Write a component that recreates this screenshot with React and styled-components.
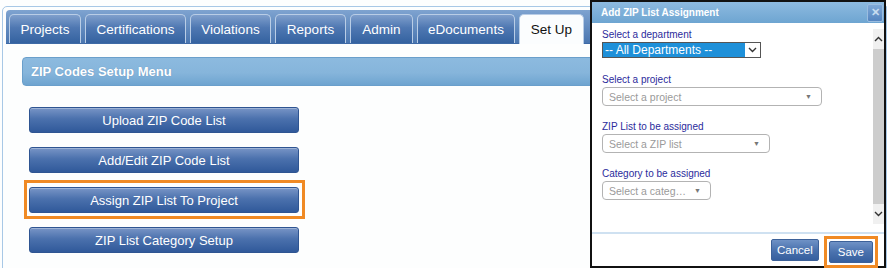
import React from 'react';
import styled, { createGlobalStyle } from "styled-components";

const GlobalStyle = createGlobalStyle`
    html, body {
        margin: 0;
        padding: 0;
        background: #ffffff;
        font-family: "Liberation Sans", Arial, sans-serif;
        overflow: hidden;
    }
`;

const Page = styled.div`
    position: relative;
    width: 887px;
    height: 268px;
    overflow: hidden;
    background: #fdfefe;
`;

const Panel = styled.div`
    margin: 6px 0 0 2px;
    height: 280px;
    border: 1px solid #a8c8e6;
    border-radius: 5px 0 0 0;
    padding: 3px 0 0 3px;
    background: #fdfefe;
`;

const TabBar = styled.div`
    display: flex;
    align-items: flex-end;
    gap: 4px;
    height: 33px;
    padding-left: 3px;
    border-radius: 4px 0 0 0;
    background: linear-gradient(#7ea3d0, #4a76b0);
    border-bottom: 1px solid #3e6aa6;
`;

const Tab = styled.div`
    display: flex;
    align-items: center;
    justify-content: center;
    width: ${p => p.$w}px;
    box-sizing: border-box;
    border: 1px solid #b9cde6;
    border-bottom: none;
    border-radius: 5px 5px 0 0;
    font-size: 13.5px;
    color: ${p => (p.$active ? "#111" : "#fff")};
    background: ${p => (p.$active
        ? "#fbfdfe"
        : "linear-gradient(#7f9fcc 0%, #4f78b2 45%, #3462a0 100%)")};
    margin-bottom: ${p => (p.$active ? "-1px" : "0")};
    height: ${p => (p.$active ? "30px" : "29px")};
`;

const Content = styled.div`
    padding: 13px 0 0 16px;
`;

const MenuHeader = styled.div`
    height: 27px;
    display: flex;
    align-items: center;
    padding-left: 8px;
    border: 1px solid #6a9fcb;
    border-radius: 4px 0 0 4px;
    background: linear-gradient(#8cbadf 0%, #86b5db 55%, #6ea4d0 100%);
    color: #fff;
    font-weight: bold;
    font-size: 13px;
    text-shadow: 0 0 1px rgba(40, 80, 130, 0.4);
`;

const MenuList = styled.div`
    display: flex;
    flex-direction: column;
    gap: 14px;
    padding: 21px 0 0 7px;
`;

const Highlight = styled.div`
    width: ${p => (p.$on ? 281 : 270)}px;
    box-sizing: border-box;
    padding: ${p => (p.$on ? "4px 3px 3px 2px" : "0")};
    margin: ${p => (p.$on ? "-7px 0 -6px -5px" : "0")};
    border: ${p => (p.$on ? "3px solid #f08a24" : "none")};
`;

const MenuButton = styled.div`
    width: 270px;
    height: 26px;
    box-sizing: border-box;
    display: flex;
    align-items: center;
    justify-content: center;
    border: 1px solid #2f5592;
    border-radius: 3px;
    background: linear-gradient(#7895c6 0%, #4b71ad 45%, #30599a 100%);
    color: #fff;
    font-size: 13px;
    box-shadow: inset 0 1px 0 rgba(255,255,255,0.3);
`;

const Dialog = styled.div`
    position: absolute;
    left: 590px;
    top: 0;
    width: 296px;
    height: 268px;
    box-sizing: border-box;
    border: 2px solid #111;
    background: #fff;
    display: flex;
    flex-direction: column;
`;

const DialogHeader = styled.div`
    height: 21px;
    flex: none;
    display: flex;
    align-items: center;
    justify-content: space-between;
    padding: 0 0 0 9px;
    background: linear-gradient(#8dbae0, #6ea5d1);
    color: #fff;
    font-weight: bold;
    font-size: 10px;
`;

const CloseBox = styled.div`
    width: 14px;
    height: 16px;
    margin-right: 1px;
    border: 1px solid #9bbde0;
    border-radius: 2px;
    background: linear-gradient(#7fa8d6, #5585c0);
    display: flex;
    align-items: center;
    justify-content: center;
    color: #c8dcf0;
    font-size: 11px;
    line-height: 1;
`;

const DialogBody = styled.div`
    flex: 1;
    display: flex;
    min-height: 0;
    border-bottom: 2px solid #cfe1f1;
`;

const Form = styled.div`
    flex: 1;
    padding: 6px 0 0 10px;
    display: flex;
    flex-direction: column;
`;

const Field = styled.div`
    display: flex;
    flex-direction: column;
    gap: 1px;
    margin-bottom: ${p => p.$mb}px;
`;

const Label = styled.div`
    font-size: 10px;
    line-height: 12px;
    color: #2b2b9c;
`;

const NativeSelect = styled.div`
    width: 159px;
    height: 16px;
    box-sizing: border-box;
    border: 1px solid #555;
    display: flex;
    align-items: center;
    background: #1e90d9;
    color: #fff;
    font-size: 12px;
    padding-left: 2px;
`;

const NativeArrow = styled.div`
    margin-left: auto;
    width: 15px;
    height: 100%;
    background: #fff;
    display: flex;
    align-items: center;
    justify-content: center;
`;

const Combo = styled.div`
    width: ${p => p.$w}px;
    height: 19px;
    box-sizing: border-box;
    border: 1px solid #b3b3b3;
    border-radius: 4px;
    display: flex;
    align-items: center;
    padding: 0 9px 0 6px;
    color: #9a9a9a;
    font-size: 10.5px;
    background: #fff;
`;

const Caret = styled.span`
    margin-left: auto;
    font-size: 7px;
    color: #777;
`;

const Scrollbar = styled.div`
    width: 11px;
    flex: none;
    margin: 6px 0 8px;
    background: #f0f0f0;
    display: flex;
    flex-direction: column;
    align-items: center;
`;

const ScrollBtn = styled.div`
    height: 20px;
    display: flex;
    align-items: center;
    justify-content: center;
`;

const Thumb = styled.div`
    flex: 1;
    width: 100%;
    background: #cdcdcd;
`;

const Footer = styled.div`
    height: 32px;
    flex: none;
    display: flex;
    align-items: center;
    justify-content: flex-end;
    gap: 5px;
    padding-right: 6px;
`;

const FootBtn = styled.div`
    height: 22px;
    box-sizing: border-box;
    padding: 0 ${p => p.$px}px;
    display: flex;
    align-items: center;
    border: 1px solid #3c6199;
    border-radius: 2px;
    background: linear-gradient(#6f92c6 0%, #4a72ae 50%, #365f9e 100%);
    color: #fff;
    font-size: 11.5px;
`;

const SaveWrap = styled.div`
    border: 3px solid #f08a24;
    padding: 2px;
    margin-top: 4px;
`;

const tabs = [
    ["Projects", 72],
    ["Certifications", 101],
    ["Violations", 81],
    ["Reports", 71],
    ["Admin", 63],
    ["eDocuments", 98],
    ["Set Up", 65],
];

const menu = [
    "Upload ZIP Code List",
    "Add/Edit ZIP Code List",
    "Assign ZIP List To Project",
    "ZIP List Category Setup",
];

const Chevron = ({ up }) => (
    <svg width="9" height="6" viewBox="0 0 9 6">
        <path
            d={up ? "M1 5 L4.5 1.5 L8 5" : "M1 1 L4.5 4.5 L8 1"}
            fill="none"
            stroke="#333"
            strokeWidth="1.4"
        />
    </svg>
);

const App = () => {
    return (
        <Page>
            <GlobalStyle />
            <Panel>
                <TabBar>
                    {tabs.map(([t, w]) => (
                        <Tab key={t} $w={w} $active={t === "Set Up"}>{t}</Tab>
                    ))}
                </TabBar>
                <Content>
                    <MenuHeader>ZIP Codes Setup Menu</MenuHeader>
                    <MenuList>
                        {menu.map((m, i) => (
                            <Highlight key={m} $on={i === 2}>
                                <MenuButton>{m}</MenuButton>
                            </Highlight>
                        ))}
                    </MenuList>
                </Content>
            </Panel>

            <Dialog>
                <DialogHeader>
                    Add ZIP List Assignment
                    <CloseBox>✕</CloseBox>
                </DialogHeader>
                <DialogBody>
                    <Form>
                        <Field $mb={16}>
                            <Label>Select a department</Label>
                            <NativeSelect>
                                -- All Departments --
                                <NativeArrow><Chevron /></NativeArrow>
                            </NativeSelect>
                        </Field>
                        <Field $mb={15}>
                            <Label>Select a project</Label>
                            <Combo $w={220}>Select a project<Caret>▼</Caret></Combo>
                        </Field>
                        <Field $mb={15}>
                            <Label>ZIP List to be assigned</Label>
                            <Combo $w={168}>Select a ZIP list<Caret>▼</Caret></Combo>
                        </Field>
                        <Field $mb={0}>
                            <Label>Category to be assigned</Label>
                            <Combo $w={109}>Select a categ…<Caret>▼</Caret></Combo>
                        </Field>
                    </Form>
                    <Scrollbar>
                        <ScrollBtn><Chevron up /></ScrollBtn>
                        <Thumb />
                        <ScrollBtn><Chevron /></ScrollBtn>
                    </Scrollbar>
                </DialogBody>
                <Footer>
                    <FootBtn $px={5}>Cancel</FootBtn>
                    <SaveWrap>
                        <FootBtn $px={8}>Save</FootBtn>
                    </SaveWrap>
                </Footer>
            </Dialog>
        </Page>
    );
};

export default App;
